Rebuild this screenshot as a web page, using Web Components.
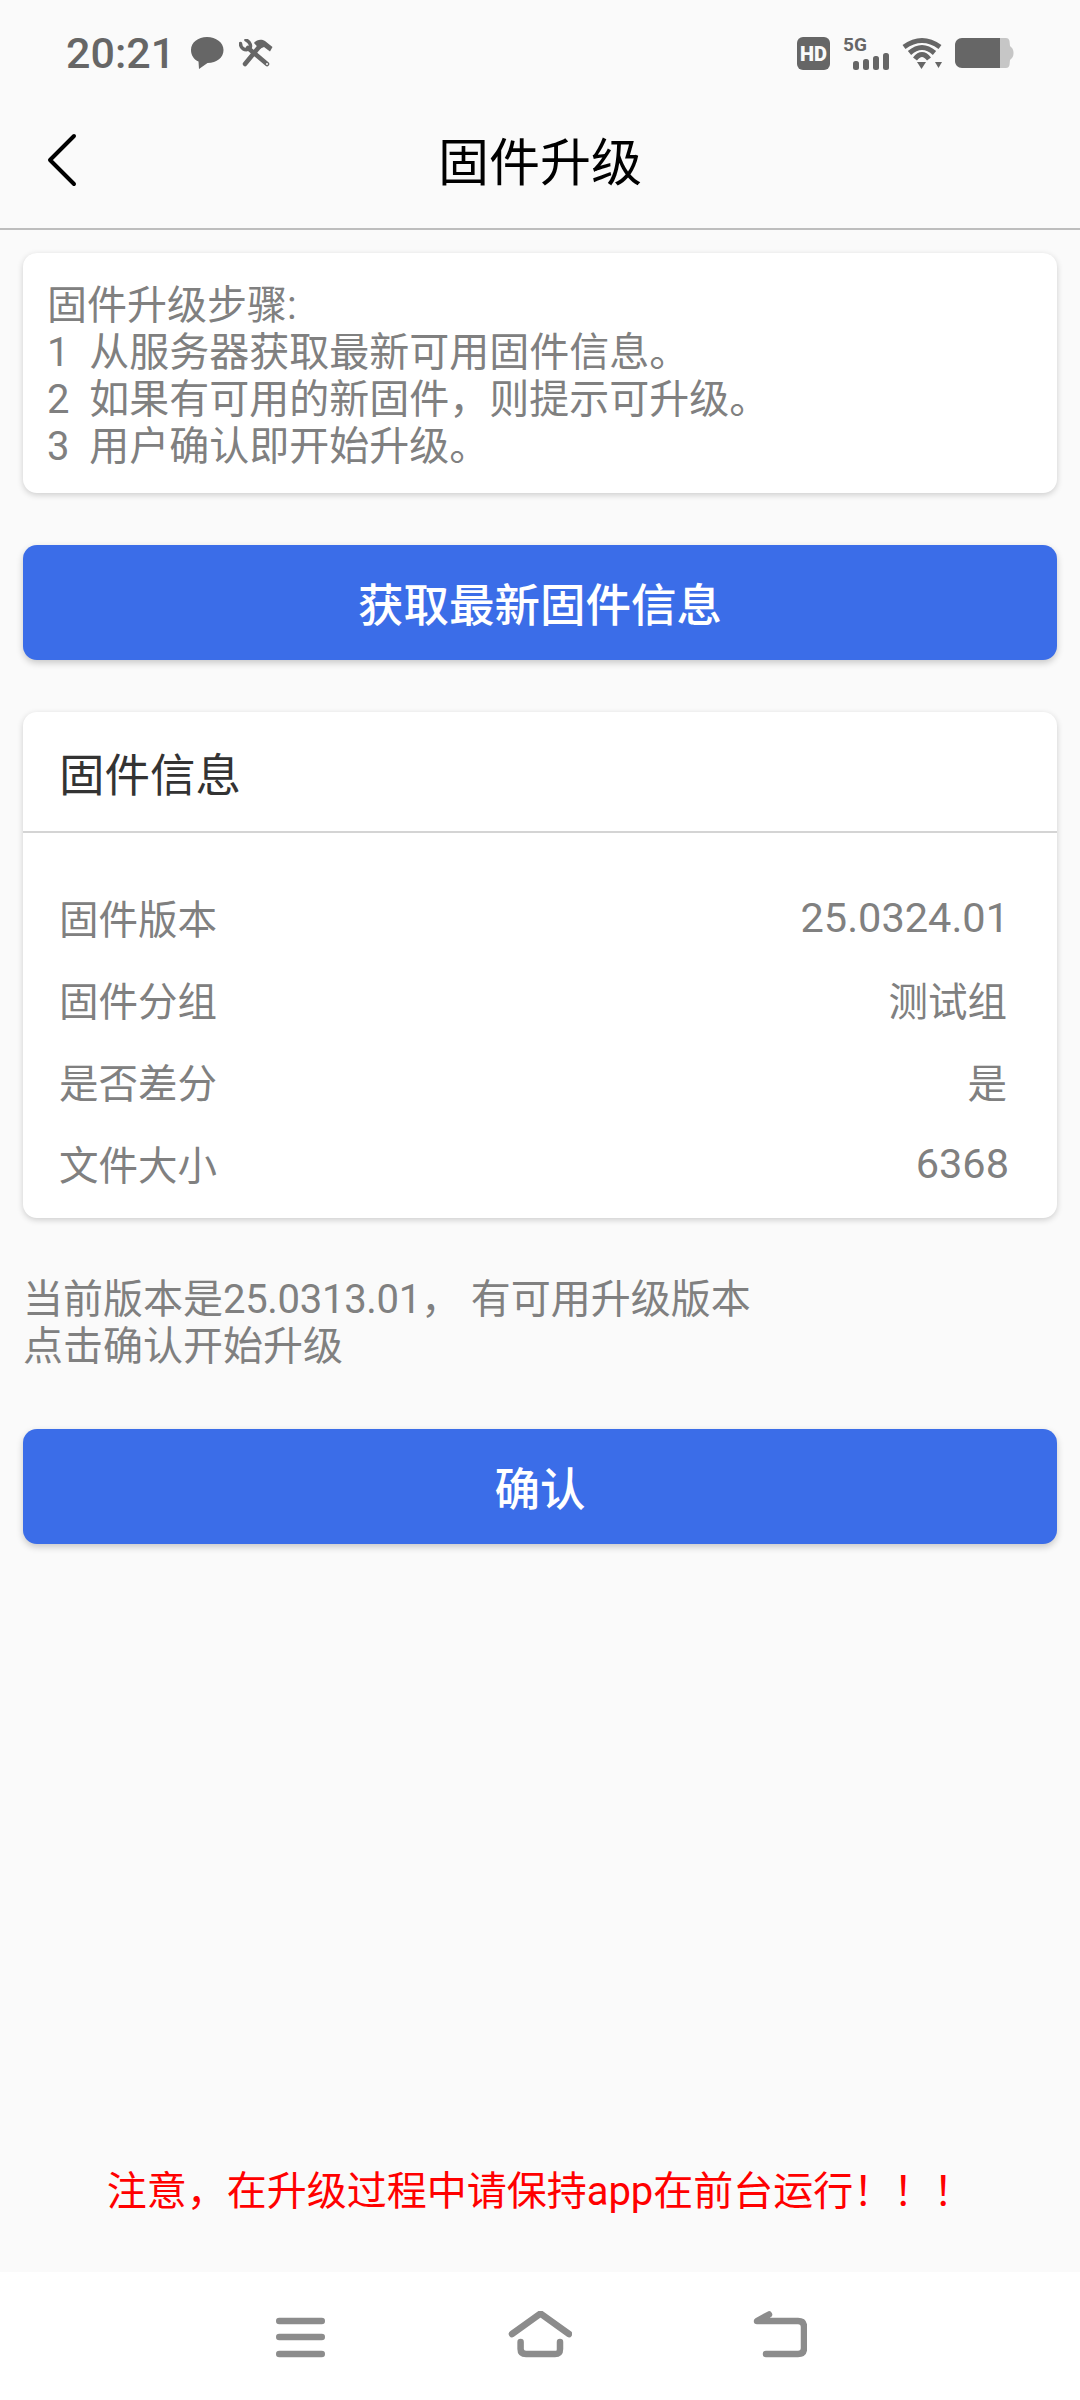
<!DOCTYPE html>
<html lang="zh">
<head>
<meta charset="utf-8">
<title>固件升级</title>
<style>
html, body { margin: 0; padding: 0; }
body {
    width: 1080px;
    height: 2400px;
    background: #fafafa;
    font-family: Roboto, "Noto Sans CJK SC", sans-serif;
    display: flex;
    flex-direction: column;
}
.grow { flex: 1; }
.tight { letter-spacing: -0.3px; }
</style>
</head>
<body>
<status-bar></status-bar>
<title-bar>固件升级</title-bar>
<info-card>固件升级步骤:<br>1&nbsp; 从服务器获取最新可用固件信息。<br>2&nbsp; 如果有可用的新固件&#xFF0C;则提示可升级。<br>3&nbsp; 用户确认即开始升级。</info-card>
<primary-button>获取最新固件信息</primary-button>
<firmware-card heading="固件信息">
    <info-row label="固件版本" value="25.0324.01"></info-row>
    <info-row label="固件分组" value="测试组"></info-row>
    <info-row label="是否差分" value="是"></info-row>
    <info-row label="文件大小" value="6368"></info-row>
</firmware-card>
<hint-text>当前版本是<span class="tight">25.0313.01</span>&#xFF0C; 有可用升级版本<br>点击确认开始升级</hint-text>
<primary-button>确认</primary-button>
<div class="grow"></div>
<warn-text>注意&#xFF0C;在升级过程中请保持app在前台运行&#xFF01;&#xFF01;&#xFF01;</warn-text>
<nav-buttons></nav-buttons>

<script>
class StatusBar extends HTMLElement {
    constructor() {
        super();
        this.attachShadow({ mode: 'open' });
        this.shadowRoot.innerHTML = `
        <style>
        :host { display: flex; align-items: center; height: 106px; padding: 0 66px; box-sizing: border-box; color: #666; }
        .time { font: 500 43px/1 Roboto, sans-serif; margin-right: 15px; }
        .right { margin-left: auto; display: flex; align-items: center; }
        svg { display: block; }
        .net { position: relative; width: 45px; height: 34px; margin: 0 14px 0 13px; }
        .net span { position: absolute; left: 0; top: -1px; font: 700 19px/1 Roboto, sans-serif; }
        .net svg { position: absolute; left: 10px; top: 17px; }
        </style>
        <span class="time">20:21</span>
        <svg width="34" height="34" viewBox="0 0 34 34" fill="#666"><path d="M17 1C8 1 1 6.500 1 14C1 19.500 4 23.500 8.500 25.500L9 33L17.500 27C27 27 33.500 21.500 33.500 14C33.500 6.500 26 1 17 1Z"/></svg>
        <svg style="margin-left:15px" width="34" height="28" viewBox="0 0 34 28" fill="none" stroke="#666" stroke-linecap="round">
            <path d="M9 9L28 25" stroke-width="4.500"/>
            <circle cx="28" cy="25" r="1" fill="#fafafa" stroke="none"/>
            <path d="M1.500 4.500C1.500 9 5.500 12 10.500 10C12.500 7.500 11.500 3 7 1" stroke-width="3.500"/>
            <path d="M6 25L20 8" stroke-width="4.500"/>
            <path d="M15 4C18 0 23 0 26 2L33.500 8L31 12.500L25 8L20.500 10Z" fill="#666" stroke="none"/>
        </svg>
        <div class="right">
            <svg width="33" height="33" viewBox="0 0 33 33">
                <rect width="33" height="33" rx="6" fill="#666"/>
                <text x="16.500" y="23.500" text-anchor="middle" font-family="Roboto, sans-serif" font-weight="900" font-size="20" fill="#fafafa">HD</text>
            </svg>
            <div class="net">
                <span>5G</span>
                <svg width="36" height="17" viewBox="0 0 36 17" fill="#666">
                    <rect x="0" y="8" width="6" height="9" rx="2.500"/>
                    <rect x="10" y="6" width="6" height="11" rx="2.500"/>
                    <rect x="20" y="3" width="6" height="14" rx="2.500"/>
                    <rect x="30" y="0" width="6" height="17" rx="2.500"/>
                </svg>
            </div>
            <svg width="40" height="33" viewBox="0 0 40 33" fill="none" stroke="#666" stroke-width="5">
                <path d="M2 10Q20 -3 38 10"/>
                <path d="M7.500 16Q20 5 32.500 16"/>
                <path d="M13 22Q20 13 27 22"/>
                <path d="M15 25H24L19.500 32Z" fill="#666" stroke="none"/>
                <path d="M33 25H40L36.500 31Z" fill="#666" stroke="none"/>
            </svg>
            <svg style="margin-left:13px" width="59" height="30" viewBox="0 0 59 30">
                <path d="M44 0H51C53 0 54 1 54.500 3L55 8L57 10C59 12 59 18 57 20L55 22L54.500 27C54 29 53 30 51 30H44Z" fill="#c6c6c6"/>
                <path d="M7 0H45V30H7C3 30 0 27 0 23V7C0 3 3 0 7 0Z" fill="#666"/>
            </svg>
        </div>`;
    }
}

class TitleBar extends HTMLElement {
    constructor() {
        super();
        this.attachShadow({ mode: 'open' });
        this.shadowRoot.innerHTML = `
        <style>
        :host { display: grid; grid-template-columns: 1fr auto 1fr; align-items: center; height: 124px; box-sizing: border-box; border-bottom: 2px solid #bdbdbd; padding-bottom: 14px; }
        svg { display: block; margin-left: 47px; }
        .title { font-size: 51px; color: #000; line-height: 60px; padding-top: 8px; }
        </style>
        <svg width="30" height="54" viewBox="0 0 30 54" fill="none" stroke="#000" stroke-width="4" stroke-linecap="round" stroke-linejoin="round"><path d="M27 3L3 27L27 51"/></svg>
        <div class="title"><slot></slot></div>`;
    }
}

class InfoCard extends HTMLElement {
    constructor() {
        super();
        this.attachShadow({ mode: 'open' });
        this.shadowRoot.innerHTML = `
        <style>
        :host { display: block; margin: 23px 23px 0; padding: 29px 24px 22px; background: #fff; border-radius: 14px; box-shadow: 0 2px 6px rgba(0,0,0,.18); font-size: 40px; line-height: 47px; color: #808080; height: 240px; box-sizing: border-box; }
        </style>
        <slot></slot>`;
    }
}

class PrimaryButton extends HTMLElement {
    constructor() {
        super();
        this.attachShadow({ mode: 'open' });
        this.shadowRoot.innerHTML = `
        <style>
        :host { display: flex; align-items: center; justify-content: center; margin: 52px 23px 0; height: 115px; padding-bottom: 2px; box-sizing: border-box; background: #3b6de8; border-radius: 14px; box-shadow: 0 3px 7px rgba(0,0,0,.2); color: #fff; font-size: 45.500px; font-weight: 500; }
        </style>
        <slot></slot>`;
    }
}

class FirmwareCard extends HTMLElement {
    constructor() {
        super();
        this.attachShadow({ mode: 'open' });
        this.shadowRoot.innerHTML = `
        <style>
        :host { display: block; margin: 52px 23px 0; background: #fff; border-radius: 14px; box-shadow: 0 2px 6px rgba(0,0,0,.18); height: 506px; box-sizing: border-box; }
        .head { height: 121px; box-sizing: border-box; padding: 0 36px; display: flex; align-items: center; font-size: 45.500px; color: #333; border-bottom: 2px solid #d4d4d4; }
        .body { padding: 42px 32px 0 36px; }
        </style>
        <div class="head">${this.getAttribute('heading')}</div>
        <div class="body"><slot></slot></div>`;
    }
}

class InfoRow extends HTMLElement {
    constructor() {
        super();
        this.attachShadow({ mode: 'open' });
        const value = this.getAttribute('value');
        const num = /^[\d.]+$/.test(value);
        this.shadowRoot.innerHTML = `
        <style>
        :host { display: flex; justify-content: space-between; align-items: center; height: 82px; font-size: 39.500px; color: #808080; padding-right: 18px; }
        .num { font-size: 41.500px; padding-top: 3px; margin-right: -2px; }
        </style>
        <span>${this.getAttribute('label')}</span>
        <span class="${num ? 'num' : ''}">${value}</span>`;
    }
}

class HintText extends HTMLElement {
    constructor() {
        super();
        this.attachShadow({ mode: 'open' });
        this.shadowRoot.innerHTML = `
        <style>
        :host { display: block; margin: 58px 23px 7px; font-size: 40px; line-height: 47px; color: #808080; }
        </style>
        <slot></slot>`;
    }
}

class WarnText extends HTMLElement {
    constructor() {
        super();
        this.attachShadow({ mode: 'open' });
        this.shadowRoot.innerHTML = `
        <style>
        :host { display: block; text-align: center; font-size: 40px; line-height: 50px; color: #f00; margin-bottom: 55px; }
        </style>
        <slot></slot>`;
    }
}

class NavButtons extends HTMLElement {
    constructor() {
        super();
        this.attachShadow({ mode: 'open' });
        this.shadowRoot.innerHTML = `
        <style>
        :host { display: flex; justify-content: center; align-items: center; height: 128px; background: #fff; box-sizing: border-box; }
        div { width: 240px; display: flex; justify-content: center; }
        svg { display: block; }
        </style>
        <div><svg width="50" height="50" viewBox="0 0 50 50" fill="#8c8c8c">
            <rect x="1" y="6.750" width="49" height="6.500" rx="3.250"/>
            <rect x="1" y="22.750" width="49" height="6.500" rx="3.250"/>
            <rect x="1" y="39.750" width="49" height="6.500" rx="3.250"/>
        </svg></div>
        <div><svg width="64" height="50" viewBox="0 0 64 50" fill="none" stroke="#8c8c8c" stroke-width="6.500" stroke-linecap="round" stroke-linejoin="round">
            <path d="M4 23L32.500 2.500L61 23"/>
            <path d="M12.600 31V38C12.600 41.500 14.500 43 18 43H47C50.500 43 52 41.500 52 38V31"/>
        </svg></div>
        <div><svg width="54" height="50" viewBox="0 0 54 50" fill="none" stroke="#8c8c8c" stroke-width="6.500" stroke-linecap="round" stroke-linejoin="round">
            <path d="M13 43H45C49 43 51 41 51 37V16C51 12 49 10 45 10H4L16 3.500"/>
        </svg></div>`;
    }
}

customElements.define('status-bar', StatusBar);
customElements.define('title-bar', TitleBar);
customElements.define('info-card', InfoCard);
customElements.define('primary-button', PrimaryButton);
customElements.define('firmware-card', FirmwareCard);
customElements.define('info-row', InfoRow);
customElements.define('hint-text', HintText);
customElements.define('warn-text', WarnText);
customElements.define('nav-buttons', NavButtons);
</script>
</body>
</html>
